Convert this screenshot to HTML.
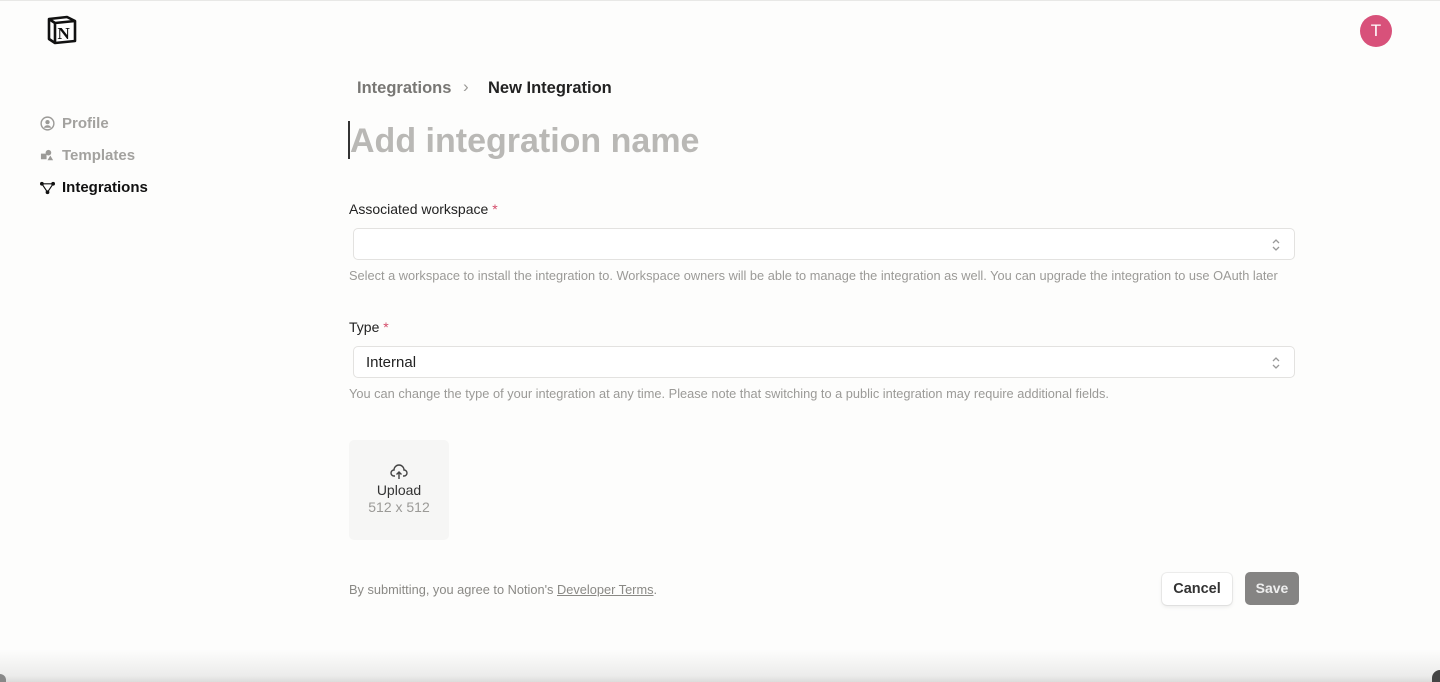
<!DOCTYPE html>
<html><head><meta charset="utf-8"><style>
*{box-sizing:border-box;margin:0;padding:0}
body{width:1440px;height:682px;background:#fdfdfc;font-family:"Liberation Sans",sans-serif;position:relative;overflow:hidden;color:#37352f}
.abs{position:absolute}
.nav{left:40px;font-size:15px;font-weight:bold;display:flex;align-items:center;gap:7px;color:#a3a29f}
.lbl{font-size:14px;color:#222;left:349px}
.lbl span{color:#d44c6a}
.sel{left:353px;width:942px;height:32px;border:1px solid #e3e2e0;border-radius:5px;background:#fff;font-size:15px;padding:7px 12px;color:#222}
.sel svg{position:absolute;right:13px;top:9px}
.help{left:349px;font-size:12.8px;color:#9b9a97}
</style></head><body>
<div class="abs" style="left:0;top:0;width:1440px;height:1px;background:#e8e8e6"></div>
<svg class="abs" style="left:47px;top:15px" width="30" height="30" viewBox="0 0 30 30"><path d="M2 4 L20 2 L28 6 L28 26 L8 28 L2 24 Z" fill="#fff" stroke="#111" stroke-width="2.6" stroke-linejoin="round"/><path d="M2 4 L8 8 L8 28 M8 8 L28 6" fill="none" stroke="#111" stroke-width="2.6"/><text x="10.5" y="24" font-family="Liberation Serif" font-weight="bold" font-size="17" fill="#111">N</text></svg>
<div class="abs" style="left:1360px;top:15px;width:32px;height:32px;border-radius:50%;background:#d8517a;color:#fff;font-size:17px;text-align:center;line-height:32px">T</div>
<div class="abs nav" style="top:115px"><svg width="15" height="15" viewBox="0 0 16 16"><circle cx="8" cy="8" r="6.8" fill="none" stroke="#9b9a97" stroke-width="1.5"/><circle cx="8" cy="6.5" r="2.3" fill="#9b9a97"/><path d="M4 12.5c1-2 2.5-2.6 4-2.6s3 .6 4 2.6" fill="#9b9a97"/></svg>Profile</div>
<div class="abs nav" style="top:147px"><svg width="15" height="15" viewBox="0 0 16 16"><rect x="1" y="6" width="6" height="6" fill="#9b9a97"/><circle cx="9" cy="5" r="3" fill="#9b9a97"/><path d="M8 13l3-5 3 5z" fill="#9b9a97"/></svg>Templates</div>
<div class="abs nav" style="top:179px;color:#111"><svg width="15" height="15" viewBox="0 0 16 16"><path d="M2 4L14 4L8 13Z" fill="none" stroke="#111" stroke-width="1.2"/><circle cx="2" cy="4" r="2" fill="#111"/><circle cx="14" cy="4" r="2" fill="#111"/><circle cx="8" cy="13" r="2" fill="#111"/></svg>Integrations</div>
<div class="abs" style="left:357px;top:79px;font-size:16.5px;color:#787774;font-weight:bold">Integrations</div>
<div class="abs" style="left:463px;top:77px;font-size:17px;color:#9b9a97">›</div>
<div class="abs" style="left:488px;top:79px;font-size:16.5px;color:#222;font-weight:bold">New Integration</div>
<div class="abs" style="left:348px;top:121px;width:2px;height:38px;background:#333"></div>
<div class="abs" style="left:350px;top:122px;font-size:34px;font-weight:bold;color:#b9b8b5">Add integration name</div>
<div class="abs lbl" style="top:201px">Associated workspace <span>*</span></div>
<div class="abs sel" style="top:228px"><svg width="10" height="14" viewBox="0 0 10 14"><path d="M2 5l3-3 3 3M2 9l3 3 3-3" fill="none" stroke="#999" stroke-width="1.3"/></svg></div>
<div class="abs help" style="top:268px">Select a workspace to install the integration to. Workspace owners will be able to manage the integration as well. You can upgrade the integration to use OAuth later</div>
<div class="abs lbl" style="top:319px">Type <span>*</span></div>
<div class="abs sel" style="top:346px">Internal<svg width="10" height="14" viewBox="0 0 10 14"><path d="M2 5l3-3 3 3M2 9l3 3 3-3" fill="none" stroke="#999" stroke-width="1.3"/></svg></div>
<div class="abs help" style="top:386px">You can change the type of your integration at any time. Please note that switching to a public integration may require additional fields.</div>
<div class="abs" style="left:349px;top:440px;width:100px;height:100px;background:#f6f6f5;border-radius:5px;text-align:center">
<svg style="margin-top:24px" width="18" height="16" viewBox="0 0 18 16"><path d="M5 12H4a3 3 0 0 1 0-6 5 5 0 0 1 10 0 3 3 0 0 1 0 6h-1" fill="none" stroke="#444" stroke-width="1.4"/><path d="M9 15V8M6.5 10.5L9 8l2.5 2.5" fill="none" stroke="#444" stroke-width="1.4"/></svg>
<div style="font-size:14px;color:#333;margin-top:-3px">Upload</div>
<div style="font-size:14px;color:#9b9a97;margin-top:1px">512 x 512</div></div>
<div class="abs help" style="top:582px;color:#8a8985">By submitting, you agree to Notion's <u>Developer Terms</u>.</div>
<div class="abs" style="left:1162px;top:573px;width:70px;height:32px;background:#fff;border-radius:5px;box-shadow:0 0 0 1px rgba(0,0,0,.06),0 2px 4px rgba(0,0,0,.08);font-size:14.5px;font-weight:bold;text-align:center;line-height:32px;color:#333">Cancel</div>
<div class="abs" style="left:1245px;top:572px;width:54px;height:33px;background:#858483;border-radius:5px;font-size:14px;text-align:center;line-height:33px;color:#eee;font-weight:bold">Save</div>
<div class="abs" style="left:0;top:650px;width:1440px;height:32px;background:linear-gradient(#fdfdfc,#ececeb 80%,#dcdcdb)"></div>
<div class="abs" style="left:0;top:674px;width:6px;height:8px;background:#888;border-top-right-radius:6px"></div>
<div class="abs" style="right:0;top:670px;width:8px;height:12px;background:#444;border-top-left-radius:8px"></div>
</body></html>
